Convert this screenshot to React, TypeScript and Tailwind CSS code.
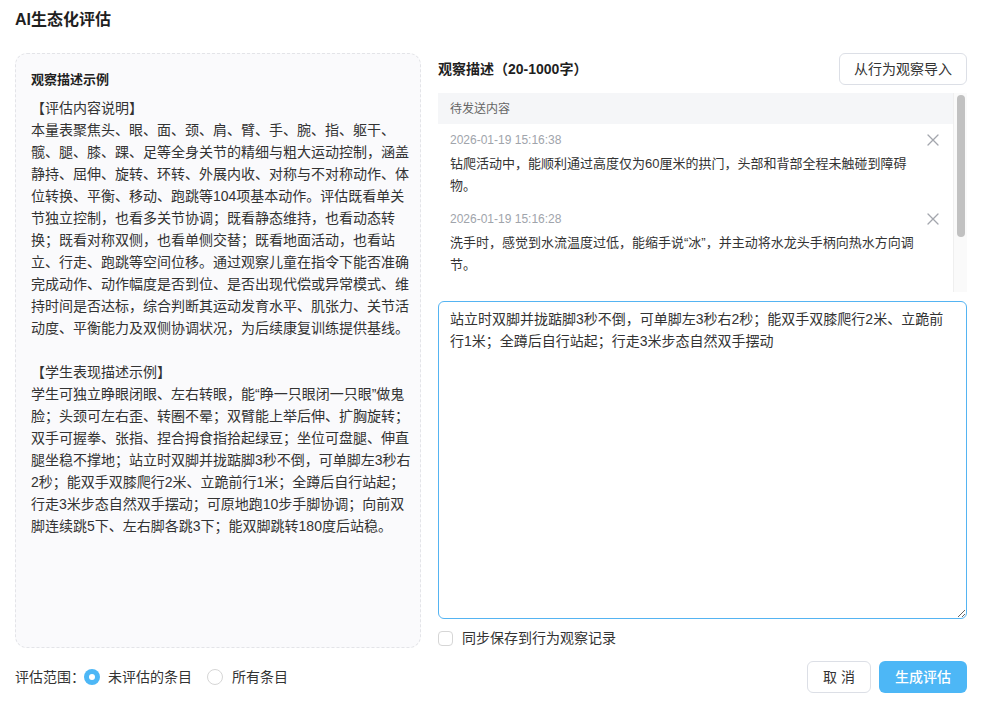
import { useEffect, useRef } from "react";

const example = `【评估内容说明】
本量表聚焦头、眼、面、颈、肩、臂、手、腕、指、躯干、髋、腿、膝、踝、足等全身关节的精细与粗大运动控制，涵盖静持、屈伸、旋转、环转、外展内收、对称与不对称动作、体位转换、平衡、移动、跑跳等104项基本动作。评估既看单关节独立控制，也看多关节协调；既看静态维持，也看动态转换；既看对称双侧，也看单侧交替；既看地面活动，也看站立、行走、跑跳等空间位移。通过观察儿童在指令下能否准确完成动作、动作幅度是否到位、是否出现代偿或异常模式、维持时间是否达标，综合判断其运动发育水平、肌张力、关节活动度、平衡能力及双侧协调状况，为后续康复训练提供基线。

【学生表现描述示例】
学生可独立睁眼闭眼、左右转眼，能“睁一只眼闭一只眼”做鬼脸；头颈可左右歪、转圈不晕；双臂能上举后伸、扩胸旋转；双手可握拳、张指、捏合拇食指拾起绿豆；坐位可盘腿、伸直腿坐稳不撑地；站立时双脚并拢踮脚3秒不倒，可单脚左3秒右2秒；能双手双膝爬行2米、立跪前行1米；全蹲后自行站起；行走3米步态自然双手摆动；可原地跑10步手脚协调；向前双脚连续跳5下、左右脚各跳3下；能双脚跳转180度后站稳。`;

const pending = [
  {
    time: "2026-01-19 15:16:38",
    text: "钻爬活动中，能顺利通过高度仅为60厘米的拱门，头部和背部全程未触碰到障碍物。",
  },
  {
    time: "2026-01-19 15:16:28",
    text: "洗手时，感觉到水流温度过低，能缩手说“冰”，并主动将水龙头手柄向热水方向调节。",
  },
  {
    time: "2026-01-19 15:16:12",
    text: "午餐时能自己用勺子舀饭送入口中，偶有洒落。",
  },
];

const draft =
  "站立时双脚并拢踮脚3秒不倒，可单脚左3秒右2秒；能双手双膝爬行2米、立跪前行1米；全蹲后自行站起；行走3米步态自然双手摆动";

function CloseIcon() {
  return (
    <svg width="12" height="12" viewBox="0 0 12 12" className="shrink-0">
      <path d="M1 1L11 11M11 1L1 11" stroke="#a3a6ad" strokeWidth="1.3" strokeLinecap="round" />
    </svg>
  );
}

export default function App() {
  const areaRef = useRef<HTMLTextAreaElement>(null);

  useEffect(() => {
    const el = areaRef.current;
    if (!el) return;
    el.focus();
    el.setSelectionRange(el.value.length, el.value.length);
  }, []);

  return (
    <div className="h-[704px] w-[986px] bg-white px-[15px] pt-[9px] font-['Liberation_Sans','Noto_Sans_CJK_SC',sans-serif] text-[#333]">
      <h1 className="text-[16px] font-semibold leading-[22px] text-[#1f1f1f]">AI生态化评估</h1>

      <div className="mt-[22px] flex gap-[17px]">
        {/* left: example */}
        <div className="h-[595px] w-[406px] shrink-0 rounded-[12px] border border-dashed border-[#e3e4e8] bg-[#fafafc] pl-[15px] pr-[6px] pt-[15px]">
          <div className="text-[13px] font-semibold leading-[22px] text-[#1f1f1f]">观察描述示例</div>
          <p className="mt-[6px] whitespace-pre-wrap text-[14px] leading-[22px] text-[#333]">{example}</p>
        </div>

        {/* right: input */}
        <div className="flex w-[529px] flex-col">
          <div className="flex h-[32px] items-center justify-between">
            <span className="text-[14px] font-semibold text-[#1f1f1f]">观察描述（20-1000字）</span>
            <button className="h-[32px] rounded-[6px] border border-[#dcdfe6] bg-white px-[14px] text-[14px] text-[#333]">
              从行为观察导入
            </button>
          </div>

          <div className="mt-[8px] flex h-[199px]">
            <div className="flex-1 overflow-hidden">
              <div className="flex h-[31px] items-center bg-[#f5f6f8] pl-[12px] text-[12px] text-[#666]">待发送内容</div>
              <div className="pt-[6px]">
                {pending.map((p) => (
                  <div key={p.time} className="pb-[12px] pl-[12px] pr-[14px]">
                    <div className="flex h-[20px] items-center justify-between">
                      <span className="text-[12px] text-[#a0a4ab]">{p.time}</span>
                      <CloseIcon />
                    </div>
                    <p className="mt-[3px] w-[470px] text-[13px] leading-[22px] text-[#333]">{p.text}</p>
                  </div>
                ))}
              </div>
            </div>
            <div className="w-[14px] border-l border-[#efefef] bg-[#fafafa] pt-[2px]">
              <div className="mx-auto h-[142px] w-[8px] rounded-full bg-[#c1c1c1]" />
            </div>
          </div>

          <textarea
            ref={areaRef}
            defaultValue={draft}
            className="mt-[9px] h-[318px] w-full resize-y rounded-[6px] border border-[#55b4f2] bg-white pl-[11px] pr-[17px] pt-[6px] text-[14px] leading-[22px] text-[#333] caret-[#111] outline-none"
          />

          <label className="mt-[10px] flex h-[18px] items-center gap-[9px]">
            <span className="h-[15px] w-[15px] rounded-[4px] border border-[#d6d6d6] bg-white" />
            <span className="text-[14px] text-[#333]">同步保存到行为观察记录</span>
          </label>
        </div>
      </div>

      <div className="mt-[13px] flex h-[32px] w-[952px] items-center justify-between">
        <div className="flex items-center text-[14px] text-[#333]">
          <span>评估范围：</span>
          <span className="ml-[-1px] flex h-[16px] w-[16px] items-center justify-center rounded-full bg-[#4db7f6]">
            <span className="h-[6px] w-[6px] rounded-full bg-white" />
          </span>
          <span className="ml-[8px]">未评估的条目</span>
          <span className="ml-[15px] h-[16px] w-[16px] rounded-full border border-[#d6d6d6] bg-white" />
          <span className="ml-[9px]">所有条目</span>
        </div>
        <div className="flex items-center gap-[8px]">
          <button className="h-[32px] w-[64px] rounded-[6px] border border-[#dcdfe6] bg-white text-[14px] text-[#333]">
            取 消
          </button>
          <button className="h-[32px] w-[88px] rounded-[6px] bg-[#4db7f6] text-[14px] font-medium text-white">
            生成评估
          </button>
        </div>
      </div>
    </div>
  );
}
